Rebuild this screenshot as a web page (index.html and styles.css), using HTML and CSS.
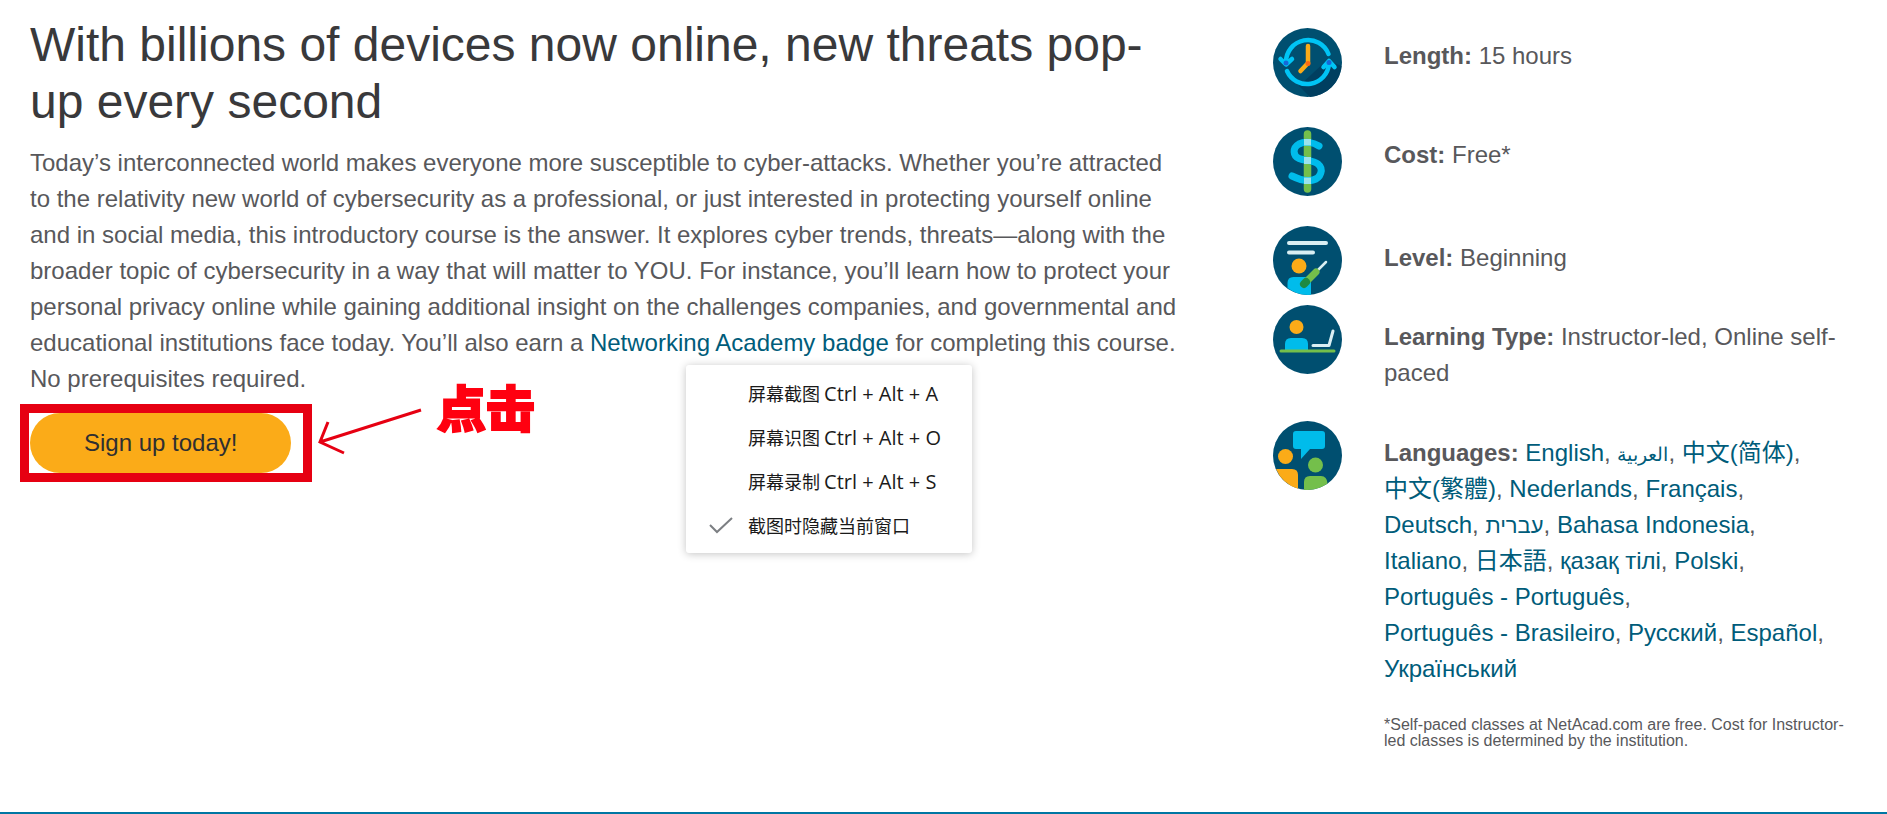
FILE: index.html
```html
<!DOCTYPE html>
<html lang="en">
<head>
<meta charset="utf-8">
<title>Introduction to Cybersecurity</title>
<link rel="stylesheet" href="styles.css">
</head>
<body>
<div class="page">
  <main class="intro">
    <h1 class="title">With billions of devices now online, new threats pop-up every second</h1>
    <p class="lead">Today’s interconnected world makes everyone more susceptible to cyber-attacks. Whether you’re attracted to the relativity new world of cybersecurity as a professional, or just interested in protecting yourself online and in social media, this introductory course is the answer. It explores cyber trends, threats—along with the broader topic of cybersecurity in a way that will matter to YOU. For instance, you’ll learn how to protect your personal privacy online while gaining additional insight on the challenges companies, and governmental and educational institutions face today. You’ll also earn a <a class="link" href="#">Networking Academy badge</a> for completing this course. No prerequisites required.</p>
    <div class="cta">
      <button class="signup" type="button">Sign up today!</button>
      <div class="mark-box"></div>
      <svg class="mark-arrow" width="110" height="44" viewBox="0 0 110 44" fill="none" stroke="#e60012" stroke-width="3"><path d="M105 4L4 36M12 16L4 36L28 47"/></svg>
      <span class="mark-text" lang="zh-CN">点击</span>
    </div>
    <div class="menu" lang="zh-CN">
      <button class="menu-item" type="button"><span class="menu-check"></span><span>屏幕截图 <span class="keys">Ctrl + Alt + A</span></span></button>
      <button class="menu-item" type="button"><span class="menu-check"></span><span>屏幕识图 <span class="keys">Ctrl + Alt + O</span></span></button>
      <button class="menu-item" type="button"><span class="menu-check"></span><span>屏幕录制 <span class="keys">Ctrl + Alt + S</span></span></button>
      <button class="menu-item" type="button"><span class="menu-check"><svg width="24" height="18" viewBox="0 0 24 18" fill="none" stroke="#7c7f83" stroke-width="2"><path d="M1 9L8 16L23 2"/></svg></span><span>截图时隐藏当前窗口</span></button>
    </div>
  </main>
  <aside class="facts">
    <div class="fact fact-high">
      <svg class="icon" viewBox="0 0 69 69">
        <circle cx="34.5" cy="34.5" r="34.5" fill="#004f70"/>
        <path d="M26 58L54 32L68.500 38A34.500 34.500 0 0 1 37 69Z" fill="#003f60"/>
        <g fill="none" stroke="#00c4f5" stroke-width="4.500" stroke-linecap="round" stroke-linejoin="round">
          <path d="M13 34A22 22 0 0 1 55.500 26M7.500 31L13 36.500L19 31"/>
          <path d="M14 43A22 22 0 0 0 56 36M50.500 39L56 33L61.500 39"/>
        </g>
        <g fill="#1668d8"><circle cx="13" cy="35" r="2.500"/><circle cx="56" cy="34.500" r="2.500"/></g>
        <path d="M35 18V35L27.500 43" fill="none" stroke="#fbab18" stroke-width="4.500" stroke-linecap="round" stroke-linejoin="round"/>
        <circle cx="35" cy="35.500" r="2.500" fill="#ff6a13"/>
      </svg>
      <p class="fact-text"><strong>Length:</strong> 15 hours</p>
    </div>
    <div class="fact fact-high">
      <svg class="icon" viewBox="0 0 69 69">
        <circle cx="34.5" cy="34.5" r="34.5" fill="#004f70"/>
        <path d="M34.500 7V62" stroke="#74bf4b" stroke-width="7.500" stroke-linecap="round"/>
        <path d="M46 19C40 15 32 14 26 17C19 21 20 29 26 31.500C32 34 40 33 45 37C51 42 48 51 40 53C32 55 25 52 19 49" fill="none" stroke="#00bceb" stroke-width="7" stroke-linecap="round"/>
        <path d="M31 12H38V18.500H31ZM31 30H38V37H31ZM31 50.500H38V57H31Z" fill="#9be3ee"/>
      </svg>
      <p class="fact-text"><strong>Cost:</strong> Free*</p>
    </div>
    <div class="fact fact-tight">
      <svg class="icon" viewBox="0 0 69 69">
        <circle cx="34.5" cy="34.5" r="34.5" fill="#004f70"/>
        <path d="M16 17H53M16 26.500H40" stroke="#d9eff3" stroke-width="4" stroke-linecap="round"/>
        <circle cx="26" cy="40" r="7.500" fill="#fbab18"/>
        <path d="M14.500 62V57Q14.500 51 20.500 51H32Q38 51 38 57V68.800A34.500 34.500 0 0 1 14.500 62Z" fill="#00bceb"/>
        <path d="M44 45L53 36" stroke="#d9eff3" stroke-width="2.500" stroke-linecap="round"/>
        <path d="M33 56L43 46" stroke="#74bf4b" stroke-width="7" stroke-linecap="round"/>
        <path d="M31 58L33 56" stroke="#1e8a41" stroke-width="8" stroke-linecap="round"/>
      </svg>
      <p class="fact-text"><strong>Level:</strong> Beginning</p>
    </div>
    <div class="fact">
      <svg class="icon" viewBox="0 0 69 69">
        <circle cx="34.5" cy="34.5" r="34.5" fill="#004f70"/>
        <circle cx="23.500" cy="22" r="7" fill="#fbab18"/>
        <path d="M12 45V39Q12 33 18 33H29Q35 33 35 39V45Z" fill="#00bceb"/>
        <path d="M8 46H61" stroke="#74bf4b" stroke-width="3" stroke-linecap="round"/>
        <path d="M40 40.500H56L60 26" fill="none" stroke="#d9eff3" stroke-width="3" stroke-linecap="round" stroke-linejoin="round"/>
      </svg>
      <p class="fact-text"><strong>Learning Type:</strong> Instructor-led, Online self-paced</p>
    </div>
    <div class="fact">
      <svg class="icon" viewBox="0 0 69 69">
        <circle cx="34.5" cy="34.5" r="34.5" fill="#004f70"/>
        <path d="M23 10H49Q52 10 52 13V25Q52 28 49 28H37L28 38V28H23Q20 28 20 25V13Q20 10 23 10Z" fill="#00bceb"/>
        <circle cx="12.500" cy="35.500" r="7.500" fill="#fbab18"/>
        <path d="M3 48H19Q25 48 25 54V67.700A34.500 34.500 0 0 1 3 48Z" fill="#fbab18"/>
        <circle cx="42.500" cy="44" r="7.500" fill="#74bf4b"/>
        <path d="M31 68.800V61Q31 55 37 55H48Q54 55 54.500 62.500A34.500 34.500 0 0 1 31 68.800Z" fill="#74bf4b"/>
      </svg>
      <p class="fact-text languages"><strong>Languages:</strong> <a class="link" href="#">English</a>, <a class="link arabic" href="#" lang="ar"><bdi>العربية</bdi></a>, <a class="link" href="#" lang="zh-CN">中文(简体)</a>, <a class="link" href="#" lang="zh-TW">中文(繁體)</a>, <a class="link" href="#">Nederlands</a>, <a class="link" href="#">Français</a>, <a class="link" href="#">Deutsch</a>, <a class="link hebrew" href="#" lang="he"><bdi>עברית</bdi></a>, <a class="link" href="#">Bahasa Indonesia</a>, <a class="link" href="#">Italiano</a>, <a class="link" href="#" lang="ja">日本語</a>, <a class="link" href="#">қазақ тілі</a>, <a class="link" href="#">Polski</a>, <a class="link" href="#">Português - Português</a>, <a class="link" href="#">Português - Brasileiro</a>, <a class="link" href="#">Русский</a>, <a class="link" href="#">Español</a>, <a class="link" href="#">Український</a></p>
    </div>
    <p class="footnote">*Self-paced classes at NetAcad.com are free. Cost for Instructor-led classes is determined by the institution.</p>
  </aside>
</div>
</body>
</html>
```
FILE: styles.css
```css
* { box-sizing: border-box; }
body {
  margin: 0;
  background: #fff;
  color: #58585b;
  font-family: "Liberation Sans", Arial, "Noto Sans CJK SC", sans-serif;
  font-size: 24px;
  line-height: 36px;
}
.page {
  display: grid;
  grid-template-columns: minmax(0, 1fr) 614px;
  column-gap: 93px;
  min-height: 100vh;
  padding-left: 30px;
  border-bottom: 2px solid #0076a3;
}
.intro { position: relative; padding-top: 16px; }
.title {
  margin: 0 0 15px;
  color: #39393b;
  font-size: 48px;
  font-weight: 400;
  line-height: 57px;
}
.lead { margin: 0 0 16px; }
.link { color: #005c7a; text-decoration: none; }

.cta { position: relative; width: fit-content; }
.signup {
  display: block;
  height: 60px;
  padding: 0 54px;
  border: 0;
  border-radius: 30px;
  background: #fbab18;
  color: #2f2f31;
  font: inherit;
}
.mark-box {
  position: absolute;
  inset: -9px -21px -9px -10px;
  border: 9px solid #e60012;
  pointer-events: none;
}
.mark-arrow { position: absolute; left: 286px; top: -7px; overflow: visible; }
.mark-text {
  position: absolute;
  left: 407px;
  top: -32px;
  color: #ff0010;
  -webkit-text-stroke: 2px #ff0010;
  stroke-linejoin: round;
  paint-order: stroke;
  font: 900 49px/50px "Noto Sans CJK SC", sans-serif;
  white-space: nowrap;
}

.menu {
  position: absolute;
  left: 656px;
  top: 365px;
  width: 286px;
  padding: 6px 0;
  border-radius: 3px;
  background: #fff;
  box-shadow: 0 1px 8px rgba(0, 0, 0, 0.24);
}
.menu-item {
  display: flex;
  align-items: center;
  width: 100%;
  height: 44px;
  padding: 0 0 0 23px;
  border: 0;
  background: none;
  color: #1a1a1a;
  font: 18px/24px "Noto Sans CJK SC", sans-serif;
  text-align: left;
  white-space: nowrap;
}
.keys { font: 20px/20px "Open Sans", sans-serif; }
.menu-check { display: flex; width: 39px; }

.facts { padding: 28px 22px 0 0; }
.fact {
  display: grid;
  grid-template-columns: 69px minmax(0, 1fr);
  column-gap: 42px;
  align-items: start;
  margin-bottom: 30px;
}
.fact-tight { margin-bottom: 10px; }
.icon { display: block; width: 69px; height: 69px; }
.fact-text { margin: 0; padding: 14px 24px 0 0; }
.fact-high .fact-text { padding-top: 10px; }
.languages .link { white-space: nowrap; }
.arabic { font-size: 19px; line-height: 24px; }
.hebrew { font-size: 22px; line-height: 24px; }
.footnote {
  margin: 0;
  padding-left: 111px;
  font-size: 16px;
  line-height: 16px;
}
```
